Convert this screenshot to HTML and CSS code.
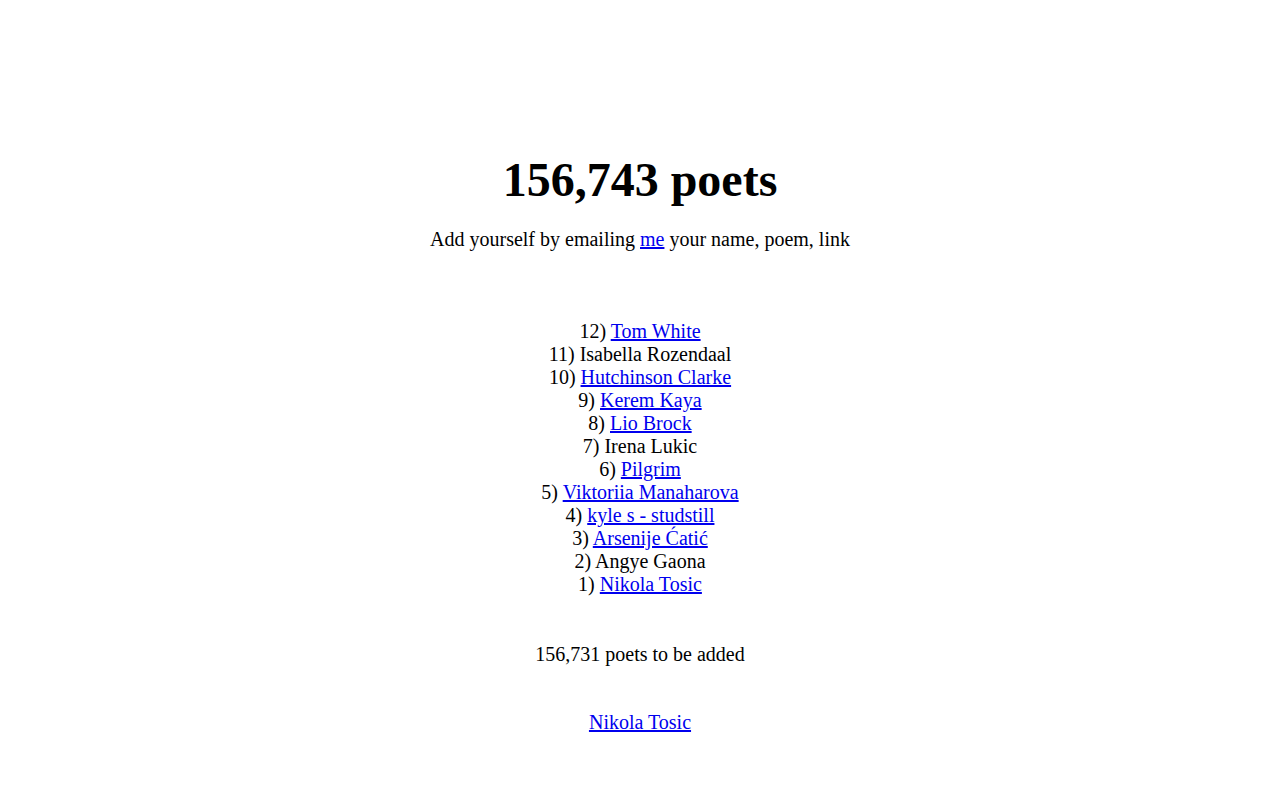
FILE: index.html
```html
<!DOCTYPE html>
<html>
<head>
<meta charset="utf-8">
<title>156,743 poets</title>
<link rel="stylesheet" href="styles.css">
</head>
<body>
<main class="page">
  <h1 class="title">156,743 poets</h1>
  <p class="intro">Add yourself by emailing <a href="#">me</a> your name, poem, link</p>
  <div class="list">
    <div>12) <a href="#">Tom White</a></div>
    <div>11) Isabella Rozendaal</div>
    <div>10) <a href="#">Hutchinson Clarke</a></div>
    <div>9) <a href="#">Kerem Kaya</a></div>
    <div>8) <a href="#">Lio Brock</a></div>
    <div>7) Irena Lukic</div>
    <div>6) <a href="#">Pilgrim</a></div>
    <div>5) <a href="#">Viktoriia Manaharova</a></div>
    <div>4) <a href="#">kyle s - studstill</a></div>
    <div>3) <a href="#">Arsenije Ćatić</a></div>
    <div>2) Angye Gaona</div>
    <div>1) <a href="#">Nikola Tosic</a></div>
  </div>
  <p class="pending">156,731 poets to be added</p>
  <p class="footer"><a href="#">Nikola Tosic</a></p>
</main>
</body>
</html>
```

FILE: styles.css
```css
html, body {
  margin: 0;
  padding: 0;
  background: #ffffff;
}
body {
  font-family: "Liberation Serif", "Times New Roman", serif;
  font-size: 20px;
  color: #000000;
}
.page {
  display: flex;
  flex-direction: column;
  align-items: center;
  text-align: center;
  padding-top: 152px;
}
a {
  color: #0000ee;
  text-decoration: underline;
}
.title {
  margin: 0;
  font-size: 48px;
  font-weight: bold;
}
.intro {
  margin: 21px 0 0;
}
.list {
  margin-top: 69px;
}
.pending {
  margin: 47px 0 0;
}
.footer {
  margin: 45px 0 0;
}
```
